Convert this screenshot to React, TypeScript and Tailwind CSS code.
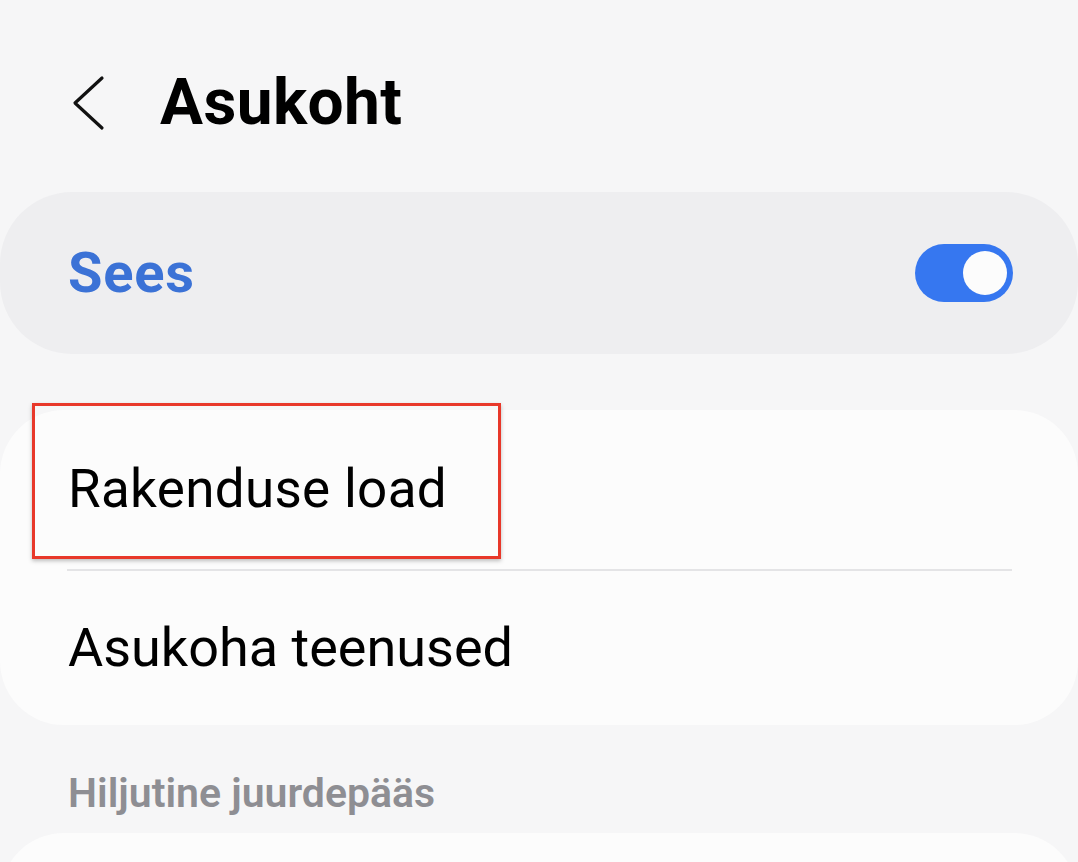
export default function App() {
  return (
    <div className="w-[1078px] h-[862px] overflow-hidden bg-[#f6f6f7] font-['Roboto',sans-serif] text-black">
      {/* HEADER */}
      <header className="flex items-center h-[64px] mt-[71px]">
        <svg width="34" height="56" viewBox="0 0 34 56" className="ml-[71px]" fill="none">
          <polyline points="31,3 4,28 31,53" stroke="#111" strokeWidth="3.2" strokeLinecap="round" strokeLinejoin="round" />
        </svg>
        <h1 className="ml-[55px] text-[64px] leading-none font-bold tracking-[0.4px]">Asukoht</h1>
      </header>

      {/* MASTER SWITCH */}
      <div className="mt-[57px] h-[162px] rounded-[72px] bg-[#eeeef0] flex items-center justify-between pl-[68px] pr-[65px]">
        <span className="text-[56px] leading-none font-bold tracking-[0.8px] text-[#3b72d6]">Sees</span>
        <div className="w-[98px] h-[58px] rounded-full bg-[#3677f0] flex items-center justify-end pr-[6px]">
          <div className="w-[44px] h-[44px] rounded-full bg-[#fcfcfc]" />
        </div>
      </div>

      {/* SETTINGS CARD */}
      <div className="mt-[56px] rounded-[64px] bg-[#fcfcfc]">
        <div className="relative h-[159px] flex items-center pl-[68px]">
          <span className="text-[53px] leading-none tracking-[0.3px]">Rakenduse load</span>
          <div className="absolute left-[32px] top-[-7px] w-[469px] h-[156px] border-[3px] border-[#e8382a] shadow-[0_2px_4px_rgba(0,0,0,0.25)]" />
        </div>
        <div className="ml-[67px] mr-[66px] h-[2px] bg-[#e4e4e6]" />
        <div className="h-[154px] flex items-center pl-[68px]">
          <span className="text-[54px] leading-none">Asukoha teenused</span>
        </div>
      </div>

      {/* RECENT */}
      <div className="mt-[48px] h-[41px] pl-[68px] text-[41px] leading-[41px] font-semibold text-[#8e8e93]">
        Hiljutine juurdepääs
      </div>
      <div className="mt-[19px] h-[200px] rounded-[64px] bg-[#fcfcfc]" />
    </div>
  );
}
